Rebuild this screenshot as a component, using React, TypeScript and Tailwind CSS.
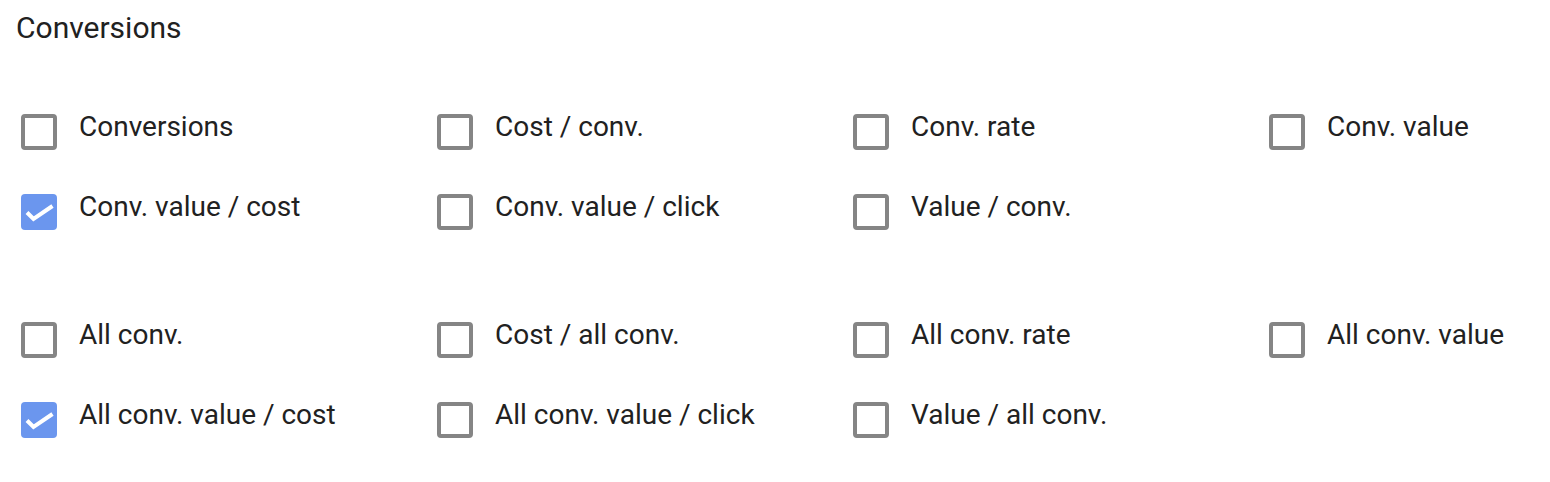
import { Fragment } from 'react';

type Option = { label: string; checked?: boolean };

const groups: Option[][] = [
  [
    { label: 'Conversions' },
    { label: 'Cost / conv.' },
    { label: 'Conv. rate' },
    { label: 'Conv. value' },
    { label: 'Conv. value / cost', checked: true },
    { label: 'Conv. value / click' },
    { label: 'Value / conv.' },
  ],
  [
    { label: 'All conv.' },
    { label: 'Cost / all conv.' },
    { label: 'All conv. rate' },
    { label: 'All conv. value' },
    { label: 'All conv. value / cost', checked: true },
    { label: 'All conv. value / click' },
    { label: 'Value / all conv.' },
  ],
];

function Checkbox({ checked }: { checked?: boolean }) {
  if (checked) {
    return (
      <div className="w-9 h-9 shrink-0 rounded-[4px] bg-[#6b96ee] flex items-center justify-center">
        <svg viewBox="0 0 36 36" className="w-9 h-9">
          <path d="M6 18.5 L12.5 25 L31.5 12" fill="none" stroke="#fff" strokeWidth="4" />
        </svg>
      </div>
    );
  }
  return <div className="w-9 h-9 shrink-0 rounded-[4px] border-4 border-[#858585] bg-white" />;
}

export default function App() {
  return (
    <div className="w-[1550px] h-[482px] overflow-hidden bg-white text-[#212121] font-['Roboto',sans-serif] pl-[16px]">
      <h2 className="text-[30px] leading-[56px] font-normal">Conversions</h2>
      <div className="mt-[36px] pl-[5px]">
        {groups.map((group, gi) => (
          <Fragment key={gi}>
            <div className={`grid grid-cols-[416px_416px_416px_1fr] ${gi > 0 ? 'mt-[48px]' : ''}`}>
              {group.map((opt) => (
                <label key={opt.label} className="flex items-center h-[80px] gap-[22px]">
                  <Checkbox checked={opt.checked} />
                  <span className="text-[28px] leading-none -mt-[10px] whitespace-nowrap">{opt.label}</span>
                </label>
              ))}
            </div>
          </Fragment>
        ))}
      </div>
    </div>
  );
}
